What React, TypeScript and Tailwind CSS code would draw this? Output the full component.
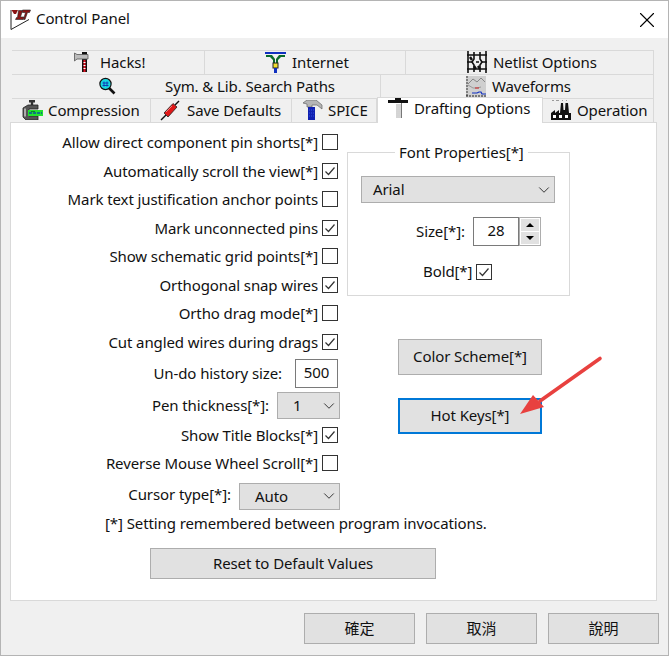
import { ReactNode } from "react";
import { ChevronDown, X } from "lucide-react";

function LogoIcon() {
  return (
    <svg width="22" height="22" viewBox="0 0 22 22" className="shrink-0">
      <path d="M1 1V20.5L19 10.5" fill="#fff" stroke="#222" strokeWidth="1" />
      <path d="M1.5 1H8L6 5H4Z" fill="#8a1414" />
      <path d="M8.5 1.5H12.5L10.5 8H14L13 10.5H5.5L6.5 8.5H7.5Z" fill="#8a1414" stroke="#222" strokeWidth="0.6" />
      <path d="M12.5 1H20.5L19.5 3.5H17.5L15 10.5H13.5L15.5 3.5H12.5Z" fill="#8a1414" stroke="#222" strokeWidth="0.6" />
    </svg>
  );
}

function HacksIcon() {
  return (
    <svg width="16" height="22" viewBox="0 0 16 22">
      <rect x="8" y="1" width="5" height="20" fill="#111" />
      <rect x="9.5" y="9" width="2" height="12" fill="#e01020" />
      <rect x="9.5" y="11" width="2" height="1" fill="#fff" />
      <rect x="9.5" y="14" width="2" height="1" fill="#fff" />
      <rect x="9.5" y="17" width="2" height="1" fill="#fff" />
      <path d="M0.5 2L3 3.5H14V8H3L0.5 10Z" fill="#bcbcbc" stroke="#555" strokeWidth="0.8" />
    </svg>
  );
}

function InternetIcon() {
  return (
    <svg width="22" height="22" viewBox="0 0 22 22">
      <path d="M0 2H21" stroke="#1030c0" strokeWidth="2" />
      <path d="M1 4H7L10 8V12H8V9L5 6H1Z" fill="#0a6a2a" />
      <path d="M20 4H14L11 8V12H13V9L16 6H20Z" fill="#0a6a2a" />
      <rect x="8" y="12" width="5" height="5" fill="#f0e030" stroke="#222" strokeWidth="1" />
      <rect x="9" y="17" width="3" height="5" fill="#1030c0" />
    </svg>
  );
}

function NetlistIcon() {
  return (
    <svg width="20" height="22" viewBox="0 0 20 22" fill="none" stroke="#111" strokeWidth="1.6">
      <path d="M1 0V22M7 1V8L5 11L7 14V21M13 1V8L15 11L13 14V21M19 0V22" />
      <path d="M0 4H20M0 11H5M9 11H12M15 11H20M0 18H20" />
      <path d="M3 6L5 9M11 15L13 18M7 15L9 18" strokeWidth="2.4" />
    </svg>
  );
}

function SearchIcon() {
  return (
    <svg width="17" height="18" viewBox="0 0 17 18">
      <path d="M10 11L15.5 16.5" stroke="#111" strokeWidth="2.6" />
      <circle cx="6.5" cy="7" r="5.6" fill="#18d8e0" stroke="#111" strokeWidth="1.2" />
      <path d="M5 4.5V9.5M8 4.5V9.5M3.5 6H9.5M3.5 8.5H9.5" stroke="#1030b0" strokeWidth="0.9" />
    </svg>
  );
}

function WaveformsIcon() {
  return (
    <svg width="20" height="21" viewBox="0 0 20 21">
      <rect width="20" height="21" fill="#cfcfcf" />
      <path d="M1 0V21" stroke="#333" strokeWidth="1" strokeDasharray="2 1" />
      <path d="M0 20H20" stroke="#222" strokeWidth="1" strokeDasharray="2 1" />
      <path d="M2 8L7 3L11 6L15 2L19 6" stroke="#888" strokeWidth="1" fill="none" />
      <path d="M2 9L7 12L11 12L15 11" stroke="#999" strokeWidth="1" fill="none" />
      <path d="M9 12H13" stroke="#d02020" strokeWidth="1" />
      <path d="M6 17H11L13 16H15L16 18H20" stroke="#1030c0" strokeWidth="1.2" fill="none" />
    </svg>
  );
}

function CompressionIcon() {
  return (
    <svg width="21" height="20" viewBox="0 0 21 20">
      <path d="M7 0H13V2.5H7Z" fill="#333" />
      <path d="M10 2V6" stroke="#333" strokeWidth="2.4" />
      <path d="M16 5H6L1 8V17L4 20H16V16H7V9H16Z" fill="#555" stroke="#222" strokeWidth="0.8" />
      <path d="M3 8.5V16.5" stroke="#c4c4c4" strokeWidth="1.6" />
      <rect x="6" y="10" width="15" height="6" fill="#22e030" />
      <path d="M7 13H20" stroke="#0a50a0" strokeWidth="1.4" strokeDasharray="3 1" />
      <path d="M9 11.5H13" stroke="#0a8a20" strokeWidth="1" />
    </svg>
  );
}

function SaveIcon() {
  return (
    <svg width="20" height="21" viewBox="0 0 20 21">
      <path d="M1 20L6 15" stroke="#111" strokeWidth="1.4" />
      <path d="M15 5L19 1" stroke="#111" strokeWidth="1.4" />
      <path d="M4 13L13 3.5L17 7L8 17Z" fill="#e01818" stroke="#222" strokeWidth="0.8" />
      <path d="M6 12L12 6" stroke="#f08080" strokeWidth="1" />
    </svg>
  );
}

function SpiceIcon() {
  return (
    <svg width="21" height="20" viewBox="0 0 21 20">
      <path d="M1 3L5 0H14L20 5V9L15 5H10V7H5V4Z" fill="#b5b5b5" stroke="#666" strokeWidth="0.7" />
      <rect x="6" y="7" width="7" height="13" fill="#1020b0" />
      <path d="M7 10H12M7 13H12M7 16H12" stroke="#3050e0" strokeWidth="1" strokeDasharray="1 1" />
    </svg>
  );
}

function DraftingIcon() {
  return (
    <svg width="20" height="20" viewBox="0 0 20 20">
      <rect x="0" y="2" width="20" height="3" fill="#111" />
      <rect x="7" y="0" width="6" height="2" fill="#111" />
      <path d="M13.5 5V20" stroke="#777" strokeWidth="1" />
      <path d="M8 7H13M8 9H13M8 11H13M8 13H13M8 15H13M8 17H13M8 19H13" stroke="#aaa" strokeWidth="1" />
    </svg>
  );
}

function OperationIcon() {
  return (
    <svg width="20" height="21" viewBox="0 0 20 21">
      <path d="M1 0H3M5 0H8M11 0H12M15 0H16" stroke="#444" strokeWidth="1" />
      <path d="M0 20V13L4 10V13L8 10V13H9L10 3H12L12.5 10H14L14.5 3H17L18 13H20V20Z" fill="#111" />
      <rect x="2" y="15" width="3" height="3" fill="#fff" />
      <rect x="8" y="15" width="3" height="3" fill="#fff" />
      <rect x="14" y="15" width="3" height="3" fill="#fff" />
    </svg>
  );
}

interface TabDef {
  label: string;
  icon: ReactNode;
  width: string;
  pl: string;
  gap: string;
  active?: boolean;
}

const tabRows: TabDef[][] = [
  [
    { label: "Hacks!", icon: <HacksIcon />, width: "w-[193px]", pl: "pl-[62px]", gap: "gap-[10px]" },
    { label: "Internet", icon: <InternetIcon />, width: "w-[201px]", pl: "pl-[60px]", gap: "gap-[5px]" },
    { label: "Netlist Options", icon: <NetlistIcon />, width: "w-[248px]", pl: "pl-[61px]", gap: "gap-[6px]" },
  ],
  [
    { label: "Sym. & Lib. Search Paths", icon: <SearchIcon />, width: "w-[369px]", pl: "pl-[87px]", gap: "gap-[49px]" },
    { label: "Waveforms", icon: <WaveformsIcon />, width: "w-[273px]", pl: "pl-[85px]", gap: "gap-[6px]" },
  ],
  [
    { label: "Compression", icon: <CompressionIcon />, width: "w-[139px]", pl: "pl-[10px]", gap: "gap-[5px]" },
    { label: "Save Defaults", icon: <SaveIcon />, width: "w-[141px]", pl: "pl-[9px]", gap: "gap-[7px]" },
    { label: "SPICE", icon: <SpiceIcon />, width: "w-[85px]", pl: "pl-[10px]", gap: "gap-[5px]" },
    { label: "Drafting Options", icon: <DraftingIcon />, width: "w-[166px]", pl: "pl-[10px]", gap: "gap-[6px]", active: true },
    { label: "Operation", icon: <OperationIcon />, width: "w-[111px]", pl: "pl-[8px]", gap: "gap-[6px]" },
  ],
];

function Tab({ tab }: { tab: TabDef }) {
  if (tab.active) {
    return (
      <div className={`relative z-10 -mt-px -mb-px flex h-[26px] items-center border-x border-t border-[#d9d9d9] bg-white pb-[5px] ${tab.width} ${tab.pl} ${tab.gap}`}>
        {tab.icon}
        <span>{tab.label}</span>
      </div>
    );
  }
  return (
    <div className={`flex h-6 items-center border-t border-r border-[#d9d9d9] pb-px ${tab.width} ${tab.pl} ${tab.gap}`}>
      {tab.icon}
      <span>{tab.label}</span>
    </div>
  );
}

function Checkbox({ checked }: { checked?: boolean }) {
  return (
    <span className="flex h-4 w-4 items-center justify-center border border-[#333] bg-white">
      {checked && (
        <svg width="12" height="12" viewBox="0 0 12 12" fill="none">
          <path d="M1.5 6.5L4.5 9.5L10.5 2.5" stroke="#333" strokeWidth="1.2" />
        </svg>
      )}
    </span>
  );
}

function CheckRow({ label, checked, h }: { label: string; checked?: boolean; h: string }) {
  return (
    <div className={`flex items-center justify-end gap-[4px] pr-[2px] ${h}`}>
      <span>{label}</span>
      <Checkbox checked={checked} />
    </div>
  );
}

function SelectBox({ value, width, textPad }: { value: string; width: string; textPad: string }) {
  return (
    <div className={`flex h-[27px] items-center justify-between border border-[#adadad] bg-[#e1e1e1] pr-px ${width} ${textPad}`}>
      <span>{value}</span>
      <ChevronDown size={18} strokeWidth={1.3} className="text-[#333]" />
    </div>
  );
}

function PushButton({ label, className }: { label: string; className: string }) {
  return (
    <button className={`flex items-center justify-center bg-[#e1e1e1] pb-px ${className}`}>
      {label}
    </button>
  );
}

export default function App() {
  return (
    <div
      className="flex h-[656px] w-[669px] flex-col border border-[#b4b4b4] bg-[#f0f0f0] text-[15px] tracking-[-0.1px] text-[#111]"
      style={{ fontFamily: '"Noto Sans", "Noto Sans CJK TC", sans-serif' }}
    >
      <header className="flex h-[37px] shrink-0 items-center justify-between bg-white pl-[9px] pr-[8px]">
        <div className="flex items-center gap-[4px]">
          <LogoIcon />
          <span className="pb-[2px]">Control Panel</span>
        </div>
        <X size={26} strokeWidth={1} className="text-black" />
      </header>

      <div className="flex min-h-0 flex-1 flex-col pl-[9px] pr-[11px] pt-[12px]">
        {tabRows.map((row, i) => (
          <div key={i} className="relative flex w-[644px] pl-[2px]">
            {row.map((tab) => (
              <Tab key={tab.label} tab={tab} />
            ))}
          </div>
        ))}

        <div className="relative flex h-[479px] shrink-0 border border-[#d9d9d9] bg-white">
          <div className="flex w-[329px] shrink-0 flex-col pt-[5px]">
            <CheckRow h="h-[28.5px]" label="Allow direct component pin shorts[*]" />
            <CheckRow h="h-[28.5px]" label="Automatically scroll the view[*]" checked />
            <CheckRow h="h-[28.5px]" label="Mark text justification anchor points" />
            <CheckRow h="h-[28.5px]" label="Mark unconnected pins" checked />
            <CheckRow h="h-[28.5px]" label="Show schematic grid points[*]" />
            <CheckRow h="h-[28.5px]" label="Orthogonal snap wires" checked />
            <CheckRow h="h-[28.5px]" label="Ortho drag mode[*]" />
            <CheckRow h="h-[28.5px]" label="Cut angled wires during drags" checked />
            <div className="flex h-[34px] items-center justify-end gap-[13px] pr-[2px]">
              <span>Un-do history size:</span>
              <span className="flex h-[29px] w-[43px] items-center justify-center border border-[#7a7a7a] pb-[2px]">500</span>
            </div>
            <div className="flex h-[31px] items-center justify-end gap-[8px]">
              <span>Pen thickness[*]:</span>
              <SelectBox value="1" width="w-[63px]" textPad="pl-[15px]" />
            </div>
            <CheckRow h="h-[28px]" label="Show Title Blocks[*]" checked />
            <CheckRow h="h-[28px]" label="Reverse Mouse Wheel Scroll[*]" />
            <div className="flex h-[38px] items-center justify-end gap-[8px]">
              <span className="-mt-[3px]">Cursor type[*]:</span>
              <SelectBox value="Auto" width="w-[101px]" textPad="pl-[15px]" />
            </div>
            <div className="flex h-[16px] items-center whitespace-nowrap pl-[94px]">
              [*] Setting remembered between program invocations.
            </div>
            <div className="pl-[139px] pt-[17px]">
              <PushButton
                label="Reset to Default Values"
                className="h-[31px] w-[286px] border border-[#adadad]"
              />
            </div>
          </div>

          <div className="flex flex-col pl-[7px] pt-[29px]">
            <div className="relative h-[144px] w-[223px] border border-[#d9d9d9] pl-[13px] pt-[23px]">
              <span className="absolute -top-[12px] left-[47px] bg-white px-[4px]">Font Properties[*]</span>
              <SelectBox value="Arial" width="w-[194px]" textPad="pl-[11px]" />
              <div className="mt-[14px] flex items-center justify-end pr-[28px]">
                <span className="mr-[8px]">Size[*]:</span>
                <span className="flex h-[29px] w-[46px] items-center justify-center border border-[#7a7a7a] pb-[3px]">28</span>
                <div className="flex h-[29px] w-[22px] flex-col gap-px border border-[#adadad] p-px">
                  <span className="flex flex-1 items-center justify-center bg-[#e1e1e1]">
                    <span className="h-0 w-0 border-x-[4px] border-b-[4px] border-x-transparent border-b-black" />
                  </span>
                  <span className="flex flex-1 items-center justify-center bg-[#e1e1e1]">
                    <span className="h-0 w-0 border-x-[4px] border-t-[4px] border-x-transparent border-t-black" />
                  </span>
                </div>
              </div>
              <div className="mt-[14px] flex items-center pl-[62px]">
                <span className="mr-[4px] pb-px">Bold[*]</span>
                <Checkbox checked />
              </div>
            </div>
            <div className="flex flex-col gap-[23px] pl-[51px] pt-[43px]">
              <PushButton label="Color Scheme[*]" className="h-[36px] w-[144px] border border-[#adadad]" />
              <PushButton label="Hot Keys[*]" className="h-[36px] w-[144px] border-2 border-[#0078d7]" />
            </div>
          </div>

          <svg width="90" height="70" viewBox="0 0 90 70" className="absolute left-[509px] top-[232px]">
            <path d="M80 3.5L20 46" stroke="#e8413f" strokeWidth="3.6" strokeLinecap="round" />
            <path d="M0 59L13 40L24 52Z" fill="#e8413f" />
          </svg>
        </div>

        <div className="-mr-[2px] flex justify-end gap-[11px] pt-[12px]">
          <PushButton label="確定" className="h-[31px] w-[111px] border border-[#adadad]" />
          <PushButton label="取消" className="h-[31px] w-[111px] border border-[#adadad]" />
          <PushButton label="說明" className="h-[31px] w-[111px] border border-[#adadad]" />
        </div>
      </div>
    </div>
  );
}
